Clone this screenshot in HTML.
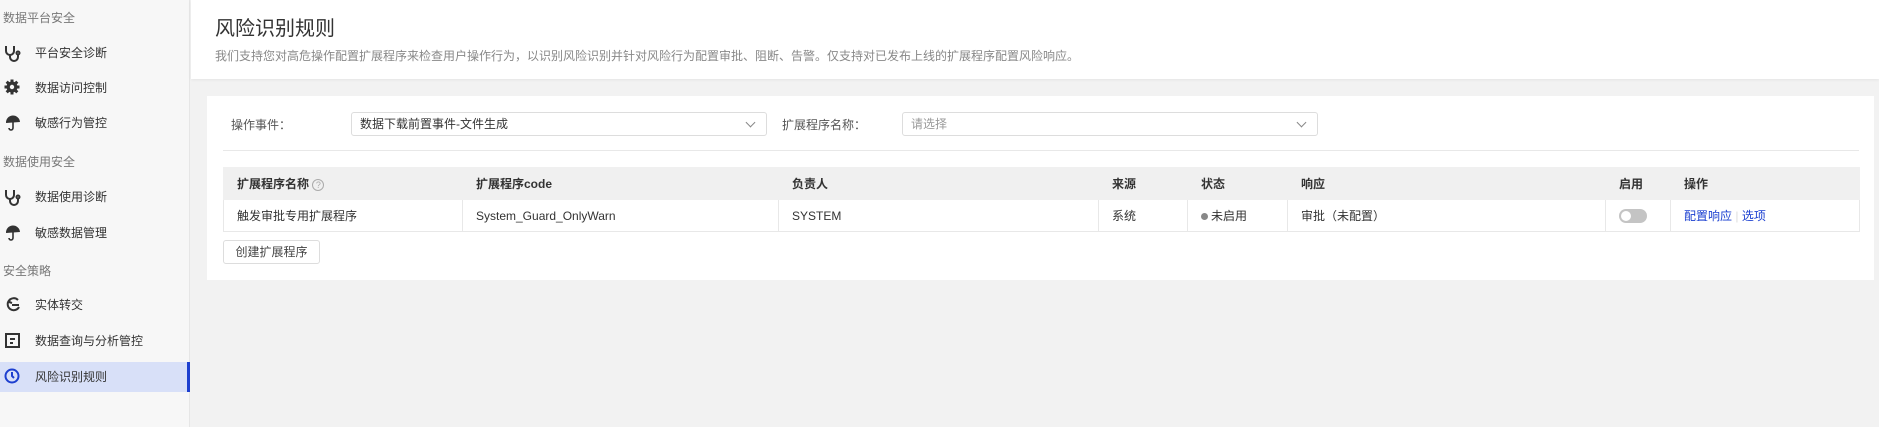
<!DOCTYPE html>
<html><head><meta charset="utf-8"><style>
*{box-sizing:border-box;margin:0;padding:0}
body{width:1879px;height:427px;overflow:hidden;background:#f2f2f2;font-family:"Liberation Sans","Noto Sans CJK SC",sans-serif;font-size:12px;color:#333;position:relative}
.side{position:absolute;left:0;top:0;width:190px;height:427px;background:#f7f7f7;border-right:1px solid #e6e6e6}
.grp{position:absolute;left:3px;color:#777;font-size:12px}
.it{position:absolute;left:0;width:190px;height:30px;line-height:30px;padding-left:35px;font-size:12px;color:#333}
.it svg{position:absolute;left:4px;top:6px}
.act{background:#d8e0f8;border-right:3px solid #1d3fcf}
.hdr{position:absolute;left:191px;top:0;right:0;height:79px;background:#fff;box-shadow:0 1px 3px rgba(0,0,0,.06)}
.hdr h1{position:absolute;left:24px;top:12px;font-size:20px;font-weight:normal;color:#333}
.hdr p{position:absolute;left:24px;top:47px;font-size:12px;color:#888}
.card{position:absolute;left:207px;top:96px;width:1667px;height:184px;background:#fff}
.lbl{position:absolute;top:20px;font-size:12px;color:#555}
.sel{position:absolute;top:16px;height:24px;border:1px solid #ddd;border-radius:3px;line-height:22px;padding-left:8px;font-size:12px;color:#333}
.sel:after{content:"";position:absolute;right:12px;top:6px;width:6px;height:6px;border-right:1.5px solid #888;border-bottom:1.5px solid #888;transform:rotate(45deg)}
.div{position:absolute;left:16px;top:54px;width:1636px;height:1px;background:#e8e8e8}
table{position:absolute;left:16px;top:71px;width:1637px;border-collapse:collapse;font-size:12px}
th{background:#f0f0f0;height:32px;text-align:left;padding-left:13px;font-weight:bold;color:#333;border:1px solid #f0f0f0}
td{height:32px;padding-left:13px;border:1px solid #e8e8e8;color:#333}
.btn{position:absolute;left:16px;top:144px;width:97px;height:24px;border:1px solid #ddd;border-radius:3px;line-height:22px;text-align:center;color:#444}
a{color:#1a3fd0;text-decoration:none}
</style></head><body>
<div class="side">
<div class="grp" style="top:9px">数据平台安全</div>
<div class="it" style="top:38px"><svg width="18" height="18" viewBox="0 0 18 18" fill="none" stroke="#333" stroke-width="2"><path d="M2 2v5a4 4 0 0 0 8 0V2M6 11v2a4 4 0 0 0 8 0v-2"/><circle cx="14" cy="9" r="1.5"/></svg>平台安全诊断</div>
<div class="it" style="top:73px"><svg width="18" height="18" viewBox="0 0 18 18"><g fill="#333"><circle cx="8" cy="8" r="5.5"/><rect x="6.5" y="0.5" width="3" height="15"/><rect x="0.5" y="6.5" width="15" height="3"/><rect x="6.5" y="0.5" width="3" height="15" transform="rotate(45 8 8)"/><rect x="6.5" y="0.5" width="3" height="15" transform="rotate(-45 8 8)"/></g><circle cx="8" cy="8" r="2.2" fill="#f7f7f7"/></svg>数据访问控制</div>
<div class="it" style="top:108px"><svg width="18" height="18" viewBox="0 0 18 18"><path d="M2 9a7 7 0 0 1 14-1z" fill="#333"/><path d="M9 8v6a2 2 0 0 1-4 0" fill="none" stroke="#333" stroke-width="1.6"/></svg>敏感行为管控</div>
<div class="grp" style="top:153px">数据使用安全</div>
<div class="it" style="top:182px"><svg width="18" height="18" viewBox="0 0 18 18" fill="none" stroke="#333" stroke-width="2"><path d="M2 2v5a4 4 0 0 0 8 0V2M6 11v2a4 4 0 0 0 8 0v-2"/><circle cx="14" cy="9" r="1.5"/></svg>数据使用诊断</div>
<div class="it" style="top:218px"><svg width="18" height="18" viewBox="0 0 18 18"><path d="M2 9a7 7 0 0 1 14-1z" fill="#333"/><path d="M9 8v6a2 2 0 0 1-4 0" fill="none" stroke="#333" stroke-width="1.6"/></svg>敏感数据管理</div>
<div class="grp" style="top:262px">安全策略</div>
<div class="it" style="top:290px"><svg width="18" height="18" viewBox="0 0 18 18" fill="none" stroke="#333" stroke-width="2"><path d="M14 4a6 6 0 1 0 1 7M6 3l-1 3 3 1M8 9h7"/></svg>实体转交</div>
<div class="it" style="top:326px"><svg width="18" height="18" viewBox="0 0 18 18" fill="none" stroke="#333" stroke-width="2"><rect x="2" y="2" width="13" height="13"/><path d="M6 7h5M6 11h3"/></svg>数据查询与分析管控</div>
<div class="it act" style="top:362px"><svg width="18" height="18" viewBox="0 0 18 18" fill="none" stroke="#1d3fcf" stroke-width="2"><circle cx="8" cy="8" r="6.5"/><path d="M8 4v4l2 2"/></svg>风险识别规则</div>
</div>
<div class="hdr"><h1>风险识别规则</h1><p>我们支持您对高危操作配置扩展程序来检查用户操作行为，以识别风险识别并针对风险行为配置审批、阻断、告警。仅支持对已发布上线的扩展程序配置风险响应。</p></div>
<div class="card">
<div class="lbl" style="left:24px">操作事件：</div>
<div class="sel" style="left:144px;width:416px">数据下载前置事件-文件生成</div>
<div class="lbl" style="left:575px">扩展程序名称：</div>
<div class="sel" style="left:695px;width:416px;color:#999">请选择</div>
<div class="div"></div>
<table><tr><th style="width:239px">扩展程序名称 <span style="display:inline-block;width:12px;height:12px;border:1px solid #aaa;border-radius:50%;font-size:9px;line-height:10px;text-align:center;color:#aaa;font-weight:normal">?</span></th><th style="width:316px">扩展程序code</th><th style="width:320px">负责人</th><th style="width:89px">来源</th><th style="width:100px">状态</th><th style="width:318px">响应</th><th style="width:65px">启用</th><th>操作</th></tr>
<tr><td>触发审批专用扩展程序</td><td>System_Guard_OnlyWarn</td><td>SYSTEM</td><td>系统</td><td><span style="display:inline-block;width:7px;height:7px;border-radius:50%;background:#888;margin-right:3px"></span>未启用</td><td>审批（未配置）</td><td><span style="display:inline-block;width:28px;height:14px;border-radius:7px;background:#c4c4c4;position:relative;vertical-align:middle"><span style="position:absolute;left:2px;top:2px;width:10px;height:10px;border-radius:50%;background:#fff"></span></span></td><td><a>配置响应</a> <span style="color:#ddd">|</span> <a>选项</a></td></tr></table>
<div class="btn">创建扩展程序</div>
</div>
</body></html>
